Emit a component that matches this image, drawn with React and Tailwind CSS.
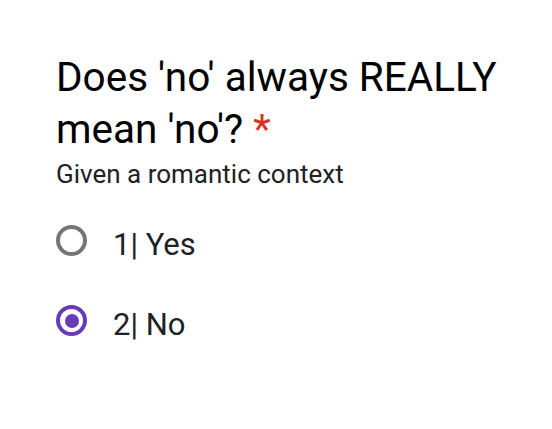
export default function App() {
  return (
    <div className="w-[552px] h-[429px] bg-white" style={{ fontFamily: 'Roboto, "Liberation Sans", sans-serif' }}>
      <div className="pl-[56px] pt-[51px]">
        <div className="text-[40.5px] leading-[52px] text-black">
          Does 'no' always REALLY mean 'no'? <span className="text-[#d93025]">*</span>
        </div>
        <div className="mt-[4px] text-[26px] leading-[30px] text-[#202124]">Given a romantic context</div>
        <div className="mt-[36px] flex flex-col gap-[44px]">
          <div className="flex items-start h-[36px]">
            <div className="w-[31px] h-[31px] rounded-full border-[4.5px] border-[#757575]" />
            <span className="ml-[26px] mt-[2px] text-[31px] leading-[36px] text-[#202124]">1| Yes</span>
          </div>
          <div className="flex items-start h-[36px]">
            <div className="w-[31px] h-[31px] rounded-full border-[4.5px] border-[#673ab7] flex items-center justify-center">
              <div className="w-[14px] h-[14px] rounded-full bg-[#673ab7]" />
            </div>
            <span className="ml-[26px] mt-[2px] text-[31px] leading-[36px] text-[#202124]">2| No</span>
          </div>
        </div>
      </div>
    </div>
  );
}
